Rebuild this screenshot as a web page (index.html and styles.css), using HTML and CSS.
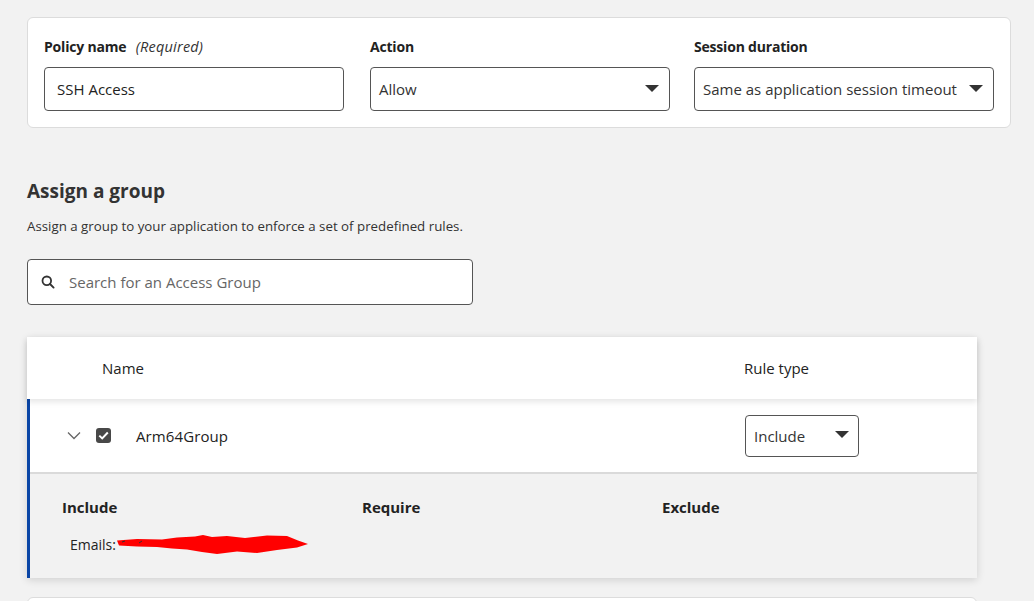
FILE: index.html
```html
<!DOCTYPE html>
<html lang="en">
<head>
<meta charset="utf-8">
<title>Policy</title>
<link rel="stylesheet" href="styles.css">
</head>
<body>
<div class="page">
  <div class="card top-card">
    <div class="field">
      <div class="label">Policy name <span class="req">(Required)</span></div>
      <div class="input">SSH Access</div>
    </div>
    <div class="field field-mid">
      <div class="label">Action</div>
      <div class="input select"><span>Allow</span><span class="caret"></span></div>
    </div>
    <div class="field">
      <div class="label">Session duration</div>
      <div class="input select"><span>Same as application session timeout</span><span class="caret"></span></div>
    </div>
  </div>

  <h2 class="heading">Assign a group</h2>
  <p class="desc">Assign a group to your application to enforce a set of predefined rules.</p>

  <div class="search">
    <svg class="search-icon" width="14" height="14" viewBox="0 0 14 14"><circle cx="5.8" cy="5.8" r="4.3" fill="none" stroke="#333" stroke-width="1.8"/><line x1="9" y1="9" x2="12.6" y2="12.6" stroke="#333" stroke-width="1.9" stroke-linecap="round"/></svg>
    <span class="placeholder">Search for an Access Group</span>
  </div>

  <div class="table">
    <div class="thead">
      <div class="th name-col">Name</div>
      <div class="th rule-col">Rule type</div>
    </div>
    <div class="group">
      <div class="row">
        <svg class="chevron" width="14" height="9" viewBox="0 0 14 9"><polyline points="1,1.5 7,7.5 13,1.5" fill="none" stroke="#666" stroke-width="1.3"/></svg>
        <span class="checkbox"><svg width="11" height="9" viewBox="0 0 11 9"><polyline points="1.3,4.6 4.2,7.4 9.8,1.5" fill="none" stroke="#fff" stroke-width="2"/></svg></span>
        <span class="group-name">Arm64Group</span>
        <div class="input select small"><span>Include</span><span class="caret"></span></div>
      </div>
      <div class="details">
        <div class="col">
          <div class="col-title">Include</div>
          <div class="col-item">Emails:<svg class="scribble" width="192" height="20" viewBox="0 0 192 20"><path d="M0 5.5 L20 4 L45 4.5 L60 2.5 L78 1.5 L86 0 L95 2 L110 1 L128 3 L150 0.5 L170 1 L181 5.5 L191 9 L180 12.5 L160 15 L140 18 L120 16.5 L100 19 L85 17 L70 14.5 L55 13.5 L40 12 L20 11.5 L2 10.5 Z" fill="#ff0000"/><path d="M5 7 L8 6 M22 8 L25 6" stroke="#333" stroke-width="1"/></svg></div>
        </div>
        <div class="col">
          <div class="col-title">Require</div>
        </div>
        <div class="col">
          <div class="col-title">Exclude</div>
        </div>
      </div>
    </div>
  </div>

  <div class="card next-card"></div>
</div>
</body>
</html>
```

FILE: styles.css
```css
* { box-sizing: border-box; }
html, body { margin: 0; padding: 0; }
body {
  background: #f2f2f2;
  font-family: "Open Sans", "Noto Sans", sans-serif;
  color: #222;
  overflow: hidden;
}
.page {
  padding: 17px 0 0 27px;
}
.card {
  background: #fff;
  border: 1px solid #dcdcdc;
  border-radius: 6px;
}
.top-card {
  width: 984px;
  display: flex;
  gap: 25px;
  padding: 19px 16px 16px 16px;
}
.field { width: 300px; }
.field-mid { margin-left: 1px; margin-right: -1px; }
.label {
  font-size: 14px;
  font-weight: 700;
  line-height: 20px;
  margin-bottom: 10px;
  color: #222;
  letter-spacing: -0.2px;
}
.req {
  font-weight: 400;
  font-style: italic;
  margin-left: 6px;
  color: #333;
  letter-spacing: 0.2px;
  font-size: 14.5px;
}
.input {
  height: 44px;
  border: 1px solid #555;
  border-radius: 4px;
  background: #fff;
  display: flex;
  align-items: center;
  padding: 0 12px;
  font-size: 15px;
  color: #222;
}
.select {
  justify-content: space-between;
  padding: 0 10px 0 8px;
  color: #333;
}
.caret {
  width: 0; height: 0;
  border-left: 7px solid transparent;
  border-right: 7px solid transparent;
  border-top: 7px solid #333;
  margin-top: -2px;
}
.heading {
  margin: 50px 0 0 0;
  font-size: 19px;
  line-height: 26px;
  font-weight: 700;
  color: #333;
}
.desc {
  margin: 13px 0 0 0;
  font-size: 13.3px;
  line-height: 18px;
  color: #333;
}
.search {
  margin-top: 24px;
  width: 446px;
  height: 46px;
  border: 1px solid #555;
  border-radius: 4px;
  background: #fff;
  display: flex;
  align-items: center;
  padding-left: 13px;
  gap: 14px;
  font-size: 15px;
}
.placeholder { color: #666; }
.table {
  margin-top: 32px;
  width: 950px;
  background: #fff;
  box-shadow: 0 2px 8px rgba(0,0,0,0.14);
}
.thead {
  height: 62px;
  display: flex;
  align-items: center;
  position: relative;
  z-index: 1;
  box-shadow: 0 3px 6px rgba(0,0,0,0.10);
  font-size: 15px;
  color: #222;
}
.name-col { padding-left: 75px; width: 717px; }
.group {
  border-left: 3px solid #0a45a5;
}
.row {
  height: 75px;
  display: flex;
  align-items: center;
  border-bottom: 2px solid #dadada;
  padding-left: 37px;
}
.chevron { margin-right: 15px; }
.checkbox {
  width: 15px; height: 15px;
  border-radius: 3px;
  background: #484848;
  display: flex;
  align-items: center;
  justify-content: center;
  margin-right: 25px;
}
.group-name {
  font-size: 15px;
  width: 609px;
  letter-spacing: 0.1px;
}
.small {
  width: 114px;
  height: 42px;
  padding: 0 9px 0 8px;
  margin-top: 0;
}
.details {
  background: #f2f2f2;
  height: 104px;
  display: flex;
  padding: 23px 0 0 32px;
}
.col { width: 300px; }
.col-title {
  font-size: 15px;
  font-weight: 700;
  line-height: 20px;
  color: #222;
}
.col-item {
  margin-top: 17px;
  padding-left: 8px;
  font-size: 14px;
  line-height: 20px;
  display: flex;
  align-items: center;
  color: #222;
}
.scribble { margin-left: 1px; margin-top: 1px; }
.next-card {
  margin-top: 19px;
  width: 950px;
  height: 40px;
}
```
